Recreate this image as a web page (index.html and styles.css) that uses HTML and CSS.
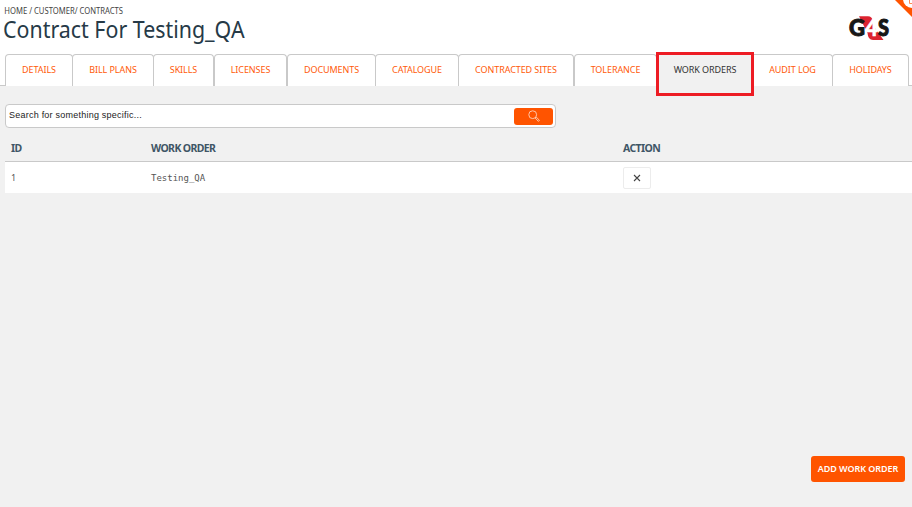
FILE: index.html
```html
<!DOCTYPE html>
<html lang="en">
<head>
<meta charset="utf-8">
<title>Contract For Testing_QA</title>
<link rel="stylesheet" href="styles.css">
</head>
<body>
<header class="header">
  <div class="heading">
    <nav class="crumbs">HOME / CUSTOMER/ CONTRACTS</nav>
    <h1 class="title">Contract For Testing_QA</h1>
  </div>
  <svg class="logo" viewBox="0 0 42 26" role="img" aria-label="G4S">
    <path d="M11 1.3H20Q24 1.3 25 6L27 13L35.5 25H25Q20 25 19.5 18Z" fill="#dc2430"/>
    <text class="logo-dark" x="1" y="21" textLength="16" lengthAdjust="spacingAndGlyphs">G</text>
    <text class="logo-light" x="17" y="21" textLength="13" lengthAdjust="spacingAndGlyphs">4</text>
    <text class="logo-dark" x="30" y="21" textLength="11" lengthAdjust="spacingAndGlyphs">S</text>
  </svg>
  <svg class="ribbon" viewBox="0 0 18 18" aria-hidden="true">
    <path d="M1 0H18V17Z" fill="#ff5400"/>
    <circle cx="18" cy="-1" r="9" fill="#fff"/>
    <path d="M15.500 0V3.500H18" fill="none" stroke="#ff8a50"/>
  </svg>
</header>
<nav class="tabs">
  <a class="tab details"><span>DETAILS</span></a>
  <a class="tab bill"><span>BILL PLANS</span></a>
  <a class="tab skills"><span>SKILLS</span></a>
  <a class="tab licenses apart"><span>LICENSES</span></a>
  <a class="tab documents apart"><span>DOCUMENTS</span></a>
  <a class="tab catalogue"><span>CATALOGUE</span></a>
  <a class="tab sites"><span>CONTRACTED SITES</span></a>
  <a class="tab tolerance apart"><span>TOLERANCE</span></a>
  <a class="tab orders"><span>WORK ORDERS</span></a>
  <a class="tab audit"><span>AUDIT LOG</span></a>
  <a class="tab holidays"><span>HOLIDAYS</span></a>
</nav>
<main class="content">
  <div class="search">
    <span class="placeholder">Search for something specific...</span>
    <button class="search-button" aria-label="Search">
      <svg viewBox="0 0 12 13" width="12" height="13" fill="none" stroke="#ffd0b8" stroke-width=".9"><circle cx="4.7" cy="4.7" r="3.9"/><path d="M7.2 8l1-1 3.2 3.2-1 1.2z"/></svg>
    </button>
  </div>
  <div class="row head"><span>ID</span><span>WORK ORDER</span><span>ACTION</span></div>
  <div class="row item">
    <span class="id">1</span><span class="name">Testing_QA</span>
    <button class="remove" aria-label="Remove"><svg viewBox="0 0 8 8" width="8" height="8" stroke="#444" stroke-width="1.1"><path d="M1 1l6 6M7 1L1 7"/></svg></button>
  </div>
  <button class="add">ADD WORK ORDER</button>
</main>
</body>
</html>
```
FILE: styles.css
```css
* { box-sizing: border-box; }
body { margin: 0; width: 912px; height: 507px; overflow: hidden; background: #fff; font-family: "Noto Sans", sans-serif; display: flex; flex-direction: column; }
button { margin: 0; padding: 0; border: 0; font-family: inherit; display: flex; align-items: center; justify-content: center; }
.header { height: 54px; flex: none; display: flex; justify-content: space-between; padding: 5px 22px 0 3px; position: relative; }
.crumbs { font-size: 8.5px; line-height: 12px; color: #444; padding-left: 1.5px; white-space: nowrap; transform: scaleX(.9); transform-origin: 0 0; }
.title { margin: 0; font-size: 23px; line-height: 24px; font-weight: 400; color: #263a47; white-space: nowrap; transform: scaleX(.93); transform-origin: 0 0; }
.logo { width: 42px; height: 26px; margin-top: 10px; overflow: visible; }
.logo text { font-family: Lato, sans-serif; font-weight: 900; }
.logo-dark { font-size: 22px; fill: #171717; stroke: #171717; stroke-width: 1; }
.logo-light { font-size: 22px; fill: #fff; stroke: #fff; stroke-width: .5; }
.ribbon { position: absolute; right: 0; top: 0; width: 18px; height: 18px; }
.tabs { height: 32px; flex: none; display: flex; padding-left: 6px; box-shadow: inset 0 -1px #c9c9c9; position: relative; z-index: 1; }
.tab { height: 32px; margin-left: -1px; flex: none; display: flex; justify-content: center; border: 1px solid #c9c9c9; border-bottom: 0; border-radius: 4px 4px 0 0; background: #fff; color: #ff5a0a; font-size: 9px; letter-spacing: -.08px; line-height: 30px; white-space: nowrap; }
.apart { margin-left: 0; }
.details { width: 68px; }
.bill { width: 82px; }
.skills { width: 61px; }
.licenses { width: 73px; }
.documents { width: 89px; }
.catalogue { width: 84px; }
.sites { width: 116px; }
.tolerance { width: 83px; }
.orders { width: 98px; height: 44px; margin-top: -2px; border: 3px solid #ed1c24; border-radius: 0; background: #f1f1f1; color: #333; }
.audit { width: 79px; margin-left: 0; padding-right: 1px; border-left: 0; border-top-left-radius: 0; }
.holidays { width: 77px; }
.content { flex: 1; background: #f1f1f1; padding: 18px 0 0 5px; display: flex; flex-direction: column; }
.search { width: 551px; height: 24px; flex: none; border: 1px solid #c9c9c9; border-radius: 4px; background: #fff; display: flex; justify-content: space-between; padding: 3px 2px 2px 3px; }
.placeholder { font: 9px/15px "Liberation Sans", sans-serif; letter-spacing: .23px; color: #222; }
.search-button { width: 39px; height: 17px; background: #ff5400; border-radius: 3px; }
.row { display: grid; grid-template-columns: 140px 472px 1fr; padding-left: 6px; align-items: center; flex: none; }
.head { height: 34px; border-bottom: 1px solid #c9c9c9; color: #3f5666; font-size: 10.5px; font-weight: 700; letter-spacing: -.62px; line-height: 13px; align-items: start; padding-top: 14px; }
.item { height: 31px; background: #fff; color: #555; }
.id { font-size: 9px; }
.name { font: 9px/12px "DejaVu Sans Mono", monospace; }
.remove { width: 28px; height: 22px; border: 1px solid #ececec; border-radius: 2px; background: #fff; }
.add { width: 94px; height: 26px; margin: auto 7px 25px auto; border-radius: 3px; background: #ff5400; color: #fff; font-size: 9px; font-weight: 600; letter-spacing: -.05px; padding-bottom: 1px; white-space: nowrap; }
```
